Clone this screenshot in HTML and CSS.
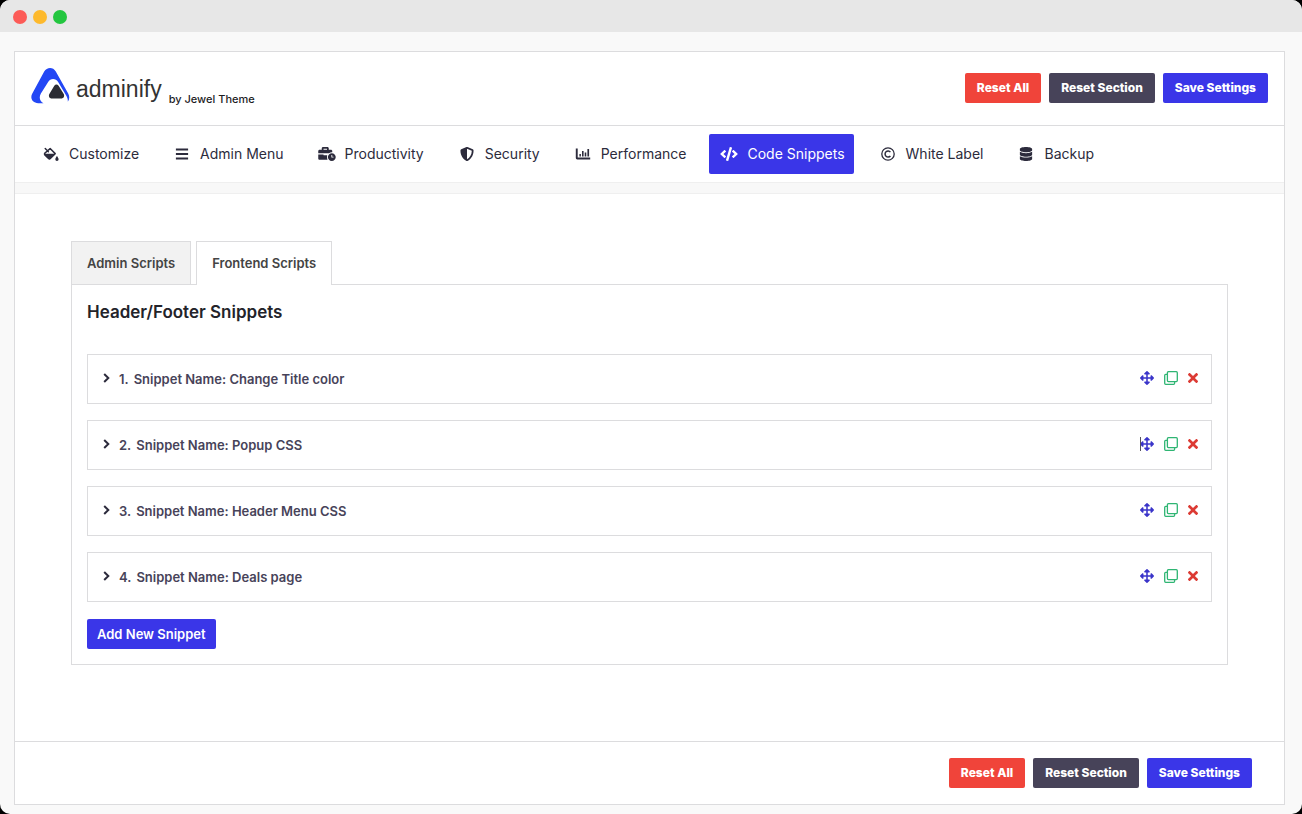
FILE: index.html
```html
<!DOCTYPE html>
<html lang="en">
<head>
    <meta charset="UTF-8">
    <meta name="viewport" content="width=device-width, initial-scale=1.0">
    <title>Adminify - Code Snippets</title>
    <link rel="stylesheet" href="styles.css">
</head>
<body>
    <svg class="sprite" aria-hidden="true">
        <symbol id="i-fill" viewBox="0 0 18 16">
            <path fill="none" stroke="currentColor" stroke-width="1.7" stroke-linejoin="round" stroke-linecap="round" d="M2.4 1.8 6 5.4M4.8 4.6 8 1.8l5.800 5.800-5.600 5.600a1.400 1.400 0 0 1-2 0L2 9a1.400 1.400 0 0 1 0-2z"/>
            <path d="M1.400 7.600h12.500l-5.600 5.800a1.600 1.600 0 0 1-2.200 0L1.800 9.200z"/>
            <path d="M15.800 10.400s-1.900 2.400-1.900 3.600a1.900 1.900 0 0 0 3.800 0c0-1.200-1.900-3.600-1.900-3.600z"/>
        </symbol>
        <symbol id="i-bars" viewBox="0 0 14 14">
            <path d="M.9 1.600h12.200v2H.9zM.9 6.100h12.200v2H.9zM.9 10.600h12.200v2H.9z"/>
        </symbol>
        <symbol id="i-business" viewBox="0 0 640 512">
            <path d="M496 224c-79.600 0-144 64.400-144 144s64.400 144 144 144 144-64.400 144-144-64.400-144-144-144zm64 150.300c0 5.300-4.400 9.700-9.700 9.700h-60.600c-5.300 0-9.700-4.400-9.700-9.700v-76.600c0-5.300 4.400-9.700 9.700-9.700h12.600c5.300 0 9.700 4.400 9.700 9.700V352h38.300c5.300 0 9.700 4.400 9.700 9.700v12.600zM496 192c5.400 0 10.700.4 16 .9V144c0-25.600-22.400-48-48-48h-80V48c0-25.600-22.400-48-48-48H176c-25.600 0-48 22.400-48 48v48H48c-25.600 0-48 22.400-48 48v80h395.100c28.600-20.100 63.400-32 100.900-32zM320 96H192V64h128v32zm6.800 208H208c-8.800 0-16-7.200-16-16v-16H0v144c0 25.600 22.400 48 48 48h291.400C327.100 430.600 320 400.200 320 368c0-22.400 3.200-44 9.100-64z"/>
        </symbol>
        <symbol id="i-shield" viewBox="0 0 512 512">
            <path d="M466.500 83.700l-192-80a48.150 48.150 0 0 0-36.900 0l-192 80C27.700 91.100 16 108.600 16 128c0 198.500 114.500 335.700 221.500 380.300 11.800 4.900 25.100 4.900 36.900 0C360.100 472.600 496 349.300 496 128c0-19.400-11.700-36.900-29.500-44.300zM256.100 446.300l-.1-381 175.900 73.300c-3.300 151.400-82.100 261.100-175.800 307.700z"/>
        </symbol>
        <symbol id="i-chart" viewBox="0 0 16 14">
            <path d="M.8 1.600h1.900v9h12.500v1.900H2.200a1.400 1.400 0 0 1-1.400-1.400zM4.400 6.900h1.500v2.700H4.400zM7 3.900h1.600v5.700H7zM9.700 5.400h1.600v4.200H9.700zM12.400 2h1.700v7.600h-1.700z"/>
        </symbol>
        <symbol id="i-code" viewBox="0 0 640 512">
            <path d="M278.900 511.500l-61-17.700c-6.400-1.800-10-8.500-8.200-14.900L346.200 8.700c1.800-6.400 8.500-10 14.900-8.200l61 17.700c6.400 1.800 10 8.500 8.200 14.900L293.800 503.300c-1.900 6.400-8.500 10.100-14.900 8.200zm-114-112.200l43.500-46.400c4.600-4.900 4.300-12.700-.8-17.200L117 256l90.600-79.700c5.100-4.500 5.500-12.300.8-17.200l-43.500-46.400c-4.500-4.800-12.100-5.100-17-.5L3.800 247.200c-5.100 4.700-5.100 12.800 0 17.500l144.100 135.100c4.900 4.600 12.500 4.400 17-.5zm327.200.6l144.100-135.100c5.100-4.700 5.100-12.800 0-17.500L492.100 112.100c-4.800-4.500-12.400-4.300-17 .5L431.600 159c-4.600 4.900-4.300 12.700.8 17.200L523 256l-90.600 79.700c-5.100 4.500-5.500 12.300-.8 17.200l43.500 46.400c4.500 4.900 12.100 5.100 17 .6z"/>
        </symbol>
        <symbol id="i-copyright" viewBox="0 0 14 14">
            <g fill="none" stroke="currentColor" stroke-width="1.300">
                <circle cx="7" cy="7" r="6.200"/>
                <path stroke-width="1.500" d="M9.400 8.900a3 3 0 1 1 0-3.800"/>
            </g>
        </symbol>
        <symbol id="i-database" viewBox="0 0 448 512">
            <path d="M448 73.143v45.714C448 159.143 347.667 192 224 192S0 159.143 0 118.857V73.143C0 32.857 100.333 0 224 0s224 32.857 224 73.143zM448 176v102.857C448 319.143 347.667 352 224 352S0 319.143 0 278.857V176c48.125 33.143 136.208 48.572 224 48.572S399.874 209.143 448 176zm0 160v102.857C448 479.143 347.667 512 224 512S0 479.143 0 438.857V336c48.125 33.143 136.208 48.572 224 48.572S399.874 369.143 448 336z"/>
        </symbol>
        <symbol id="i-chevron" viewBox="0 0 8 10">
            <path fill="none" stroke="currentColor" stroke-width="2" d="M1.200 1 5.300 5l-4.100 4"/>
        </symbol>
        <symbol id="i-move" viewBox="0 0 512 512">
            <path d="M352.201 425.775l-79.196 79.196c-9.373 9.373-24.568 9.373-33.941 0l-79.196-79.196c-15.119-15.119-4.411-40.971 16.971-40.970h51.162L228 284H127.196v51.162c0 21.382-25.851 32.090-40.971 16.971L7.029 272.937c-9.373-9.373-9.373-24.569 0-33.941L86.225 159.800c15.119-15.119 40.971-4.411 40.971 16.971V228H228V127.196h-51.230c-21.382 0-32.090-25.851-16.971-40.971l79.196-79.196c9.373-9.373 24.568-9.373 33.941 0l79.196 79.196c15.119 15.119 4.411 40.971-16.971 40.971h-51.162V228h100.804v-51.162c0-21.382 25.851-32.090 40.970-16.971l79.196 79.196c9.373 9.373 9.373 24.569 0 33.941L425.773 352.200c-15.119 15.119-40.971 4.411-40.970-16.971V284H284v100.804h51.230c21.382 0 32.090 25.851 16.971 40.971z"/>
        </symbol>
        <symbol id="i-clone" viewBox="0 0 14 14">
            <g fill="none" stroke="currentColor" stroke-width="1.300">
                <rect x="3.400" y=".7" width="9.900" height="9.900" rx="1"/>
                <path d="M3.400 3.400H1.700a1 1 0 0 0-1 1v7.900a1 1 0 0 0 1 1h7.900a1 1 0 0 0 1-1v-1.700"/>
            </g>
        </symbol>
        <symbol id="i-times" viewBox="0 80 352 352">
            <path d="M242.720 256l100.070-100.070c12.280-12.280 12.280-32.190 0-44.480l-22.240-22.240c-12.280-12.280-32.190-12.280-44.480 0L176 189.280 75.930 89.210c-12.280-12.280-32.190-12.280-44.480 0L9.210 111.450c-12.280 12.280-12.280 32.190 0 44.480L109.280 256 9.210 356.070c-12.280 12.280-12.280 32.190 0 44.480l22.240 22.240c12.280 12.280 32.200 12.280 44.480 0L176 322.720l100.070 100.070c12.280 12.280 32.200 12.280 44.480 0l22.240-22.240c12.280-12.280 12.280-32.190 0-44.480L242.720 256z"/>
        </symbol>
    </svg>

    <div class="window">
        <div class="titlebar">
            <span class="dot dot-red"></span>
            <span class="dot dot-yellow"></span>
            <span class="dot dot-green"></span>
        </div>
        <div class="panel">
            <header class="header">
                <div class="brand">
                    <svg class="brand-logo" viewBox="0 0 39 36" aria-hidden="true">
                        <path fill="#2347f5" d="M12.500 35.200H7.200C1.500 35.200-1.300 30.300 1.300 25.500L13.200 3.600C15.800-1.100 22-1.200 24.800 3.400L37.200 25.600c1.600 3 1.300 5.600-.4 8.200.2-2.300-.4-4-1.500-6L27.300 14.300c-2.500-4.300-7.800-4.400-10.300-.1L9.900 25.600c-2.300 3.800-1 7.500 2.600 9.600z"/>
                        <path fill="#2b2c33" d="M23.300 17.800c1.100-1.700 3.200-1.700 4.300 0l5 8c1.300 2.300.2 4.800-2.600 4.800h-9c-2.700 0-3.900-2.500-2.500-4.800z"/>
                    </svg>
                    <span class="brand-name">adminify</span>
                    <small class="brand-by">by Jewel Theme</small>
                </div>
                <div class="buttons">
                    <button type="button" class="btn btn-red">Reset All</button>
                    <button type="button" class="btn btn-dark">Reset Section</button>
                    <button type="button" class="btn">Save Settings</button>
                </div>
            </header>

            <nav class="nav">
                <a class="nav-item" href="#customize"><svg class="nav-icon"><use href="#i-fill"/></svg>Customize</a>
                <a class="nav-item" href="#menu"><svg class="nav-icon"><use href="#i-bars"/></svg>Admin Menu</a>
                <a class="nav-item" href="#productivity"><svg class="nav-icon"><use href="#i-business"/></svg>Productivity</a>
                <a class="nav-item" href="#security"><svg class="nav-icon"><use href="#i-shield"/></svg>Security</a>
                <a class="nav-item" href="#performance"><svg class="nav-icon"><use href="#i-chart"/></svg>Performance</a>
                <a class="nav-item active" href="#snippets"><svg class="nav-icon"><use href="#i-code"/></svg>Code Snippets</a>
                <a class="nav-item" href="#label"><svg class="nav-icon"><use href="#i-copyright"/></svg>White Label</a>
                <a class="nav-item" href="#backup"><svg class="nav-icon"><use href="#i-database"/></svg>Backup</a>
            </nav>

            <main class="main">
                <div class="tabs">
                    <button type="button" class="tab">Admin Scripts</button>
                    <button type="button" class="tab active">Frontend Scripts</button>
                </div>
                <section class="box">
                    <h2 class="box-title">Header/Footer Snippets</h2>
                    <ul class="snippets">
                        <li class="snippet">
                            <button type="button" class="snippet-title"><svg class="chevron"><use href="#i-chevron"/></svg><span>1.</span><span>Snippet Name: Change Title color</span></button>
                            <div class="actions">
                                <button type="button" class="action move" aria-label="Move"><svg><use href="#i-move"/></svg></button>
                                <button type="button" class="action clone" aria-label="Clone"><svg><use href="#i-clone"/></svg></button>
                                <button type="button" class="action remove" aria-label="Remove"><svg><use href="#i-times"/></svg></button>
                            </div>
                        </li>
                        <li class="snippet">
                            <button type="button" class="snippet-title"><svg class="chevron"><use href="#i-chevron"/></svg><span>2.</span><span>Snippet Name: Popup CSS</span></button>
                            <div class="actions">
                                <button type="button" class="action move caret" aria-label="Move"><svg><use href="#i-move"/></svg></button>
                                <button type="button" class="action clone" aria-label="Clone"><svg><use href="#i-clone"/></svg></button>
                                <button type="button" class="action remove" aria-label="Remove"><svg><use href="#i-times"/></svg></button>
                            </div>
                        </li>
                        <li class="snippet">
                            <button type="button" class="snippet-title"><svg class="chevron"><use href="#i-chevron"/></svg><span>3.</span><span>Snippet Name: Header Menu CSS</span></button>
                            <div class="actions">
                                <button type="button" class="action move" aria-label="Move"><svg><use href="#i-move"/></svg></button>
                                <button type="button" class="action clone" aria-label="Clone"><svg><use href="#i-clone"/></svg></button>
                                <button type="button" class="action remove" aria-label="Remove"><svg><use href="#i-times"/></svg></button>
                            </div>
                        </li>
                        <li class="snippet">
                            <button type="button" class="snippet-title"><svg class="chevron"><use href="#i-chevron"/></svg><span>4.</span><span>Snippet Name: Deals page</span></button>
                            <div class="actions">
                                <button type="button" class="action move" aria-label="Move"><svg><use href="#i-move"/></svg></button>
                                <button type="button" class="action clone" aria-label="Clone"><svg><use href="#i-clone"/></svg></button>
                                <button type="button" class="action remove" aria-label="Remove"><svg><use href="#i-times"/></svg></button>
                            </div>
                        </li>
                    </ul>
                    <button type="button" class="btn btn-add">Add New Snippet</button>
                </section>
            </main>

            <footer class="footer">
                <div class="buttons">
                    <button type="button" class="btn btn-red">Reset All</button>
                    <button type="button" class="btn btn-dark">Reset Section</button>
                    <button type="button" class="btn">Save Settings</button>
                </div>
            </footer>
        </div>
    </div>
</body>
</html>
```

FILE: styles.css
```css
* {
    box-sizing: border-box;
}
body {
    margin: 0;
    background-color: #000;
    color: #2c2b3c;
    font-family: Inter, "Liberation Sans", sans-serif;
    font-size: 14px;
}
button {
    margin: 0;
    padding: 0;
    border: 0;
    background: none;
    font-family: inherit;
    cursor: pointer;
}
svg {
    display: block;
    fill: currentColor;
}
.sprite {
    display: none;
}
.window {
    display: flex;
    flex-direction: column;
    min-height: 100vh;
    background-color: #f9f9f9;
    border-radius: 10px;
    overflow: hidden;
}
.titlebar {
    display: flex;
    align-items: center;
    gap: 6px;
    height: 32px;
    padding: 2px 13px 0;
    background-color: #e7e7e7;
}
.dot {
    width: 14px;
    height: 14px;
    border-radius: 50%;
}
.dot-red {
    background-color: #fc5b57;
}
.dot-yellow {
    background-color: #fdb92c;
}
.dot-green {
    background-color: #23c63f;
}
.panel {
    display: flex;
    flex-direction: column;
    flex: 1;
    margin: 19px 17px 9px 14px;
    border: 1px solid #dcdcde;
    background-color: #fff;
}
.header {
    display: flex;
    align-items: center;
    justify-content: space-between;
    height: 74px;
    padding: 0 16px 2px;
    border-bottom: 1px solid #dcdcde;
}
.brand {
    display: flex;
    align-items: center;
}
.brand-logo {
    width: 39px;
    height: 36px;
    margin-bottom: 4px;
}
.brand-name {
    margin: 2px 0 0 6px;
    color: #333;
    font-family: "Liberation Sans", sans-serif;
    font-size: 23px;
    line-height: 32px;
}
.brand-by {
    margin: 22px 0 0 7px;
    color: #1d1d1f;
    font-size: 11px;
    font-weight: 500;
    line-height: 14px;
}
.buttons {
    display: flex;
    gap: 8px;
}
.btn {
    height: 30px;
    padding: 0 12px;
    border-radius: 2px;
    background-color: #3a36e8;
    color: #fff;
    font-size: 12px;
    font-weight: 800;
    line-height: 30px;
}
.btn-red {
    background-color: #f0443a;
}
.btn-dark {
    background-color: #474359;
}
.btn-add {
    padding: 0 10px;
    font-size: 13px;
    font-weight: 600;
}
.nav {
    display: flex;
    gap: 14px;
    padding: 8px 16px;
    border-bottom: 1px solid #efefef;
}
.nav-item {
    display: flex;
    align-items: center;
    height: 40px;
    padding: 0 9px 1px 11px;
    border-radius: 2px;
    color: #2c2b3c;
    text-decoration: none;
}
.nav-item.active {
    background-color: #3a36e8;
    color: #fff;
}
.nav-icon {
    width: 18px;
    height: 14px;
    margin-right: 9px;
}
.main {
    flex: 1;
    padding: 48px 56px;
    border-top: 10px solid #f8f8f8;
    box-shadow: inset 0 1px #efefef;
}
.tabs {
    display: flex;
    gap: 5px;
}
.tab {
    height: 43px;
    padding: 0 15px;
    border: 1px solid #dcdcde;
    border-bottom: 0;
    background-color: #f2f2f2;
    color: #444;
    font-size: 13px;
    font-weight: 600;
}
.tab.active {
    height: 44px;
    margin-bottom: -1px;
    padding-bottom: 1px;
    background-color: #fff;
    z-index: 1;
}
.box {
    padding: 15px;
    border: 1px solid #dcdcde;
}
.box-title {
    margin: 0 0 30px;
    color: #23232a;
    font-size: 17px;
    font-weight: 600;
    line-height: 24px;
}
.snippets {
    display: flex;
    flex-direction: column;
    gap: 16px;
    margin: 0 0 17px;
    padding: 0;
    list-style: none;
}
.snippet {
    display: flex;
    align-items: center;
    justify-content: space-between;
    height: 50px;
    padding: 0 13px 0 15px;
    border: 1px solid #dcdcde;
}
.snippet-title {
    display: flex;
    align-items: center;
    gap: 5px;
    color: #474359;
    font-size: 13px;
    font-weight: 600;
    line-height: 20px;
}
.chevron {
    width: 8px;
    height: 10px;
    margin: 0 3px 2px 0;
    color: #2c2b3c;
}
.actions {
    display: flex;
    align-items: center;
    gap: 10px;
    padding-bottom: 2px;
}
.action svg {
    width: 14px;
    height: 14px;
}
.move {
    color: #3a34c9;
}
.clone {
    color: #2fb573;
}
.remove {
    color: #dc3b34;
}
.remove svg {
    width: 10px;
}
/* insertion mark at the edge of the drag handle */
.caret {
    position: relative;
}
.caret::before {
    content: "";
    position: absolute;
    top: 0;
    left: 0;
    width: 1px;
    height: 14px;
    background-color: #55535f;
}
.footer {
    display: flex;
    justify-content: flex-end;
    padding: 16px 32px;
    border-top: 1px solid #dcdcde;
}
```
